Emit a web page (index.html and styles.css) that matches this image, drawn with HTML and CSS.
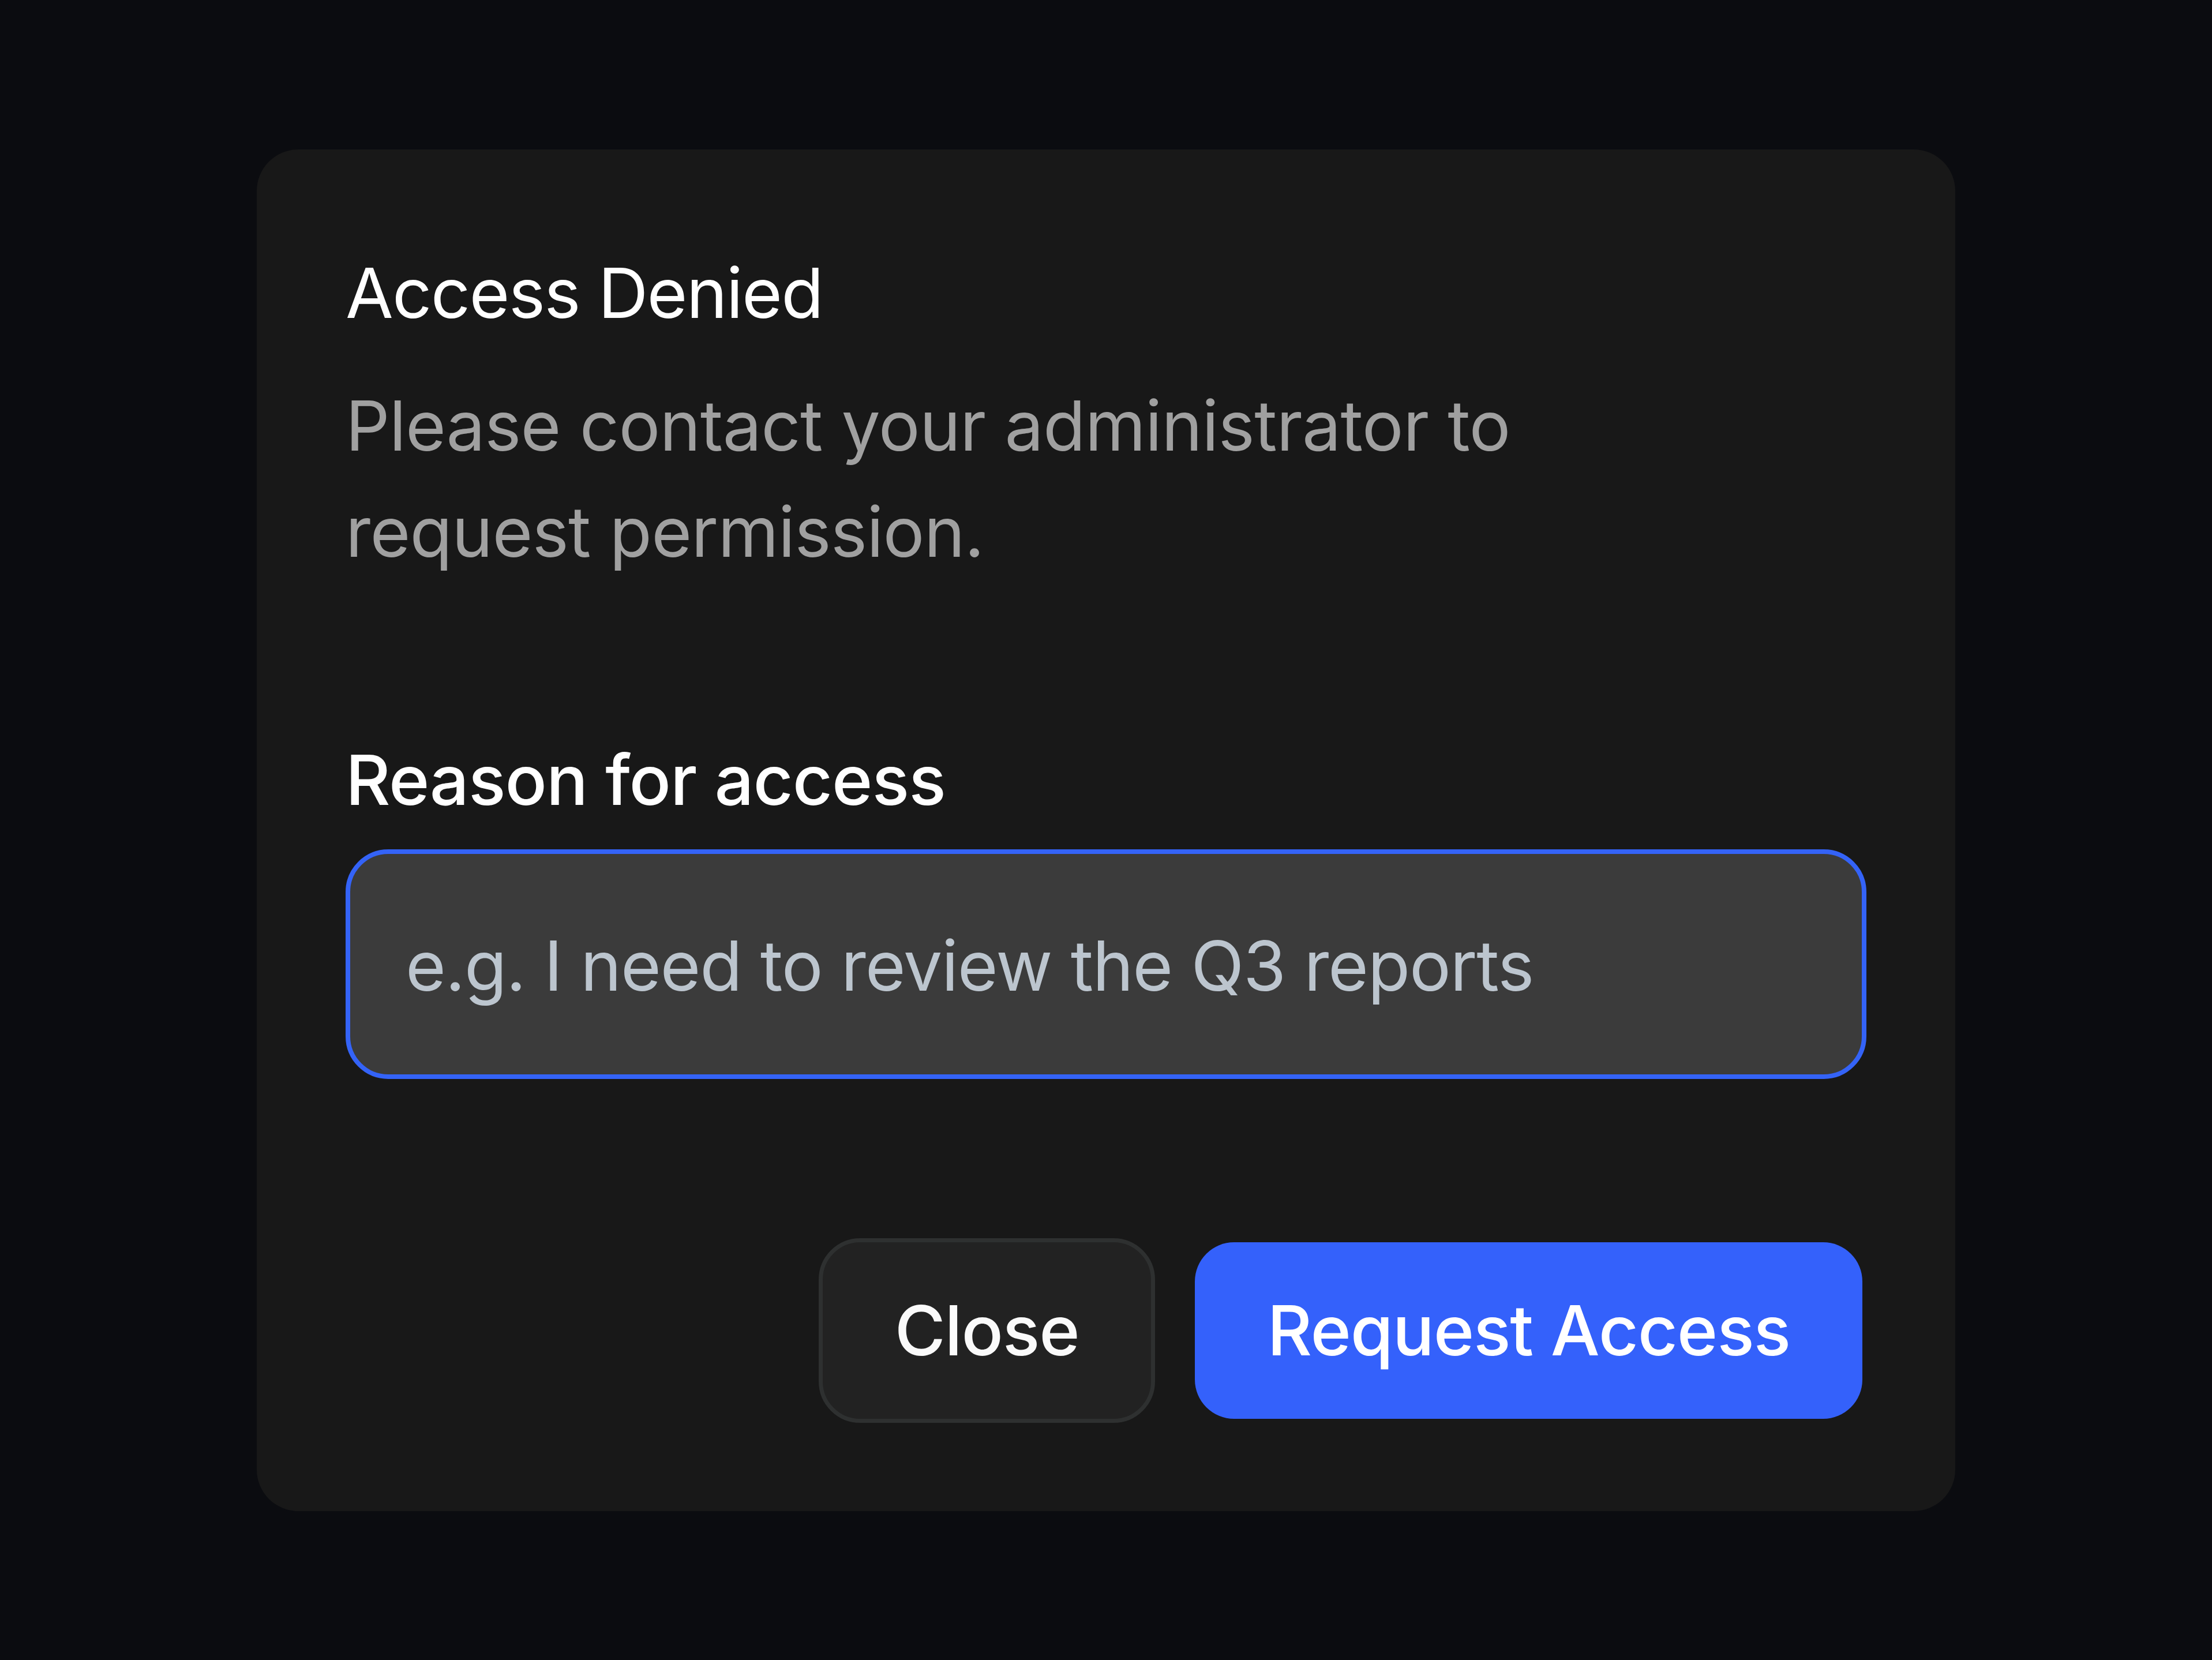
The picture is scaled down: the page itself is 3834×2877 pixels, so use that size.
FILE: index.html
```html
<!DOCTYPE html>
<html lang="en">
<head>
<meta charset="utf-8">
<title>Access Denied</title>
<link rel="stylesheet" href="styles.css">
</head>
<body>
<div class="card">
  <h1 class="title">Access Denied</h1>
  <p class="desc">Please contact your administrator to request permission.</p>
  <div class="field">
    <label class="label" for="reason">Reason for access</label>
    <input class="input" id="reason" type="text" placeholder="e.g. I need to review the Q3 reports">
  </div>
  <div class="actions">
    <button class="btn btn-secondary" type="button">Close</button>
    <button class="btn btn-primary" type="button">Request Access</button>
  </div>
</div>
</body>
</html>
```

FILE: styles.css
```css
html, body {
  margin: 0;
  padding: 0;
}
body {
  background: #0b0c10;
  min-height: 100vh;
  display: flex;
  align-items: center;
  justify-content: center;
  font-family: Inter, "Noto Sans", "Liberation Sans", sans-serif;
}
.card {
  width: 2944px;
  box-sizing: border-box;
  padding: 159px 154px 153px;
  background: #181818;
  border-radius: 72px;
  display: flex;
  flex-direction: column;
}
.title {
  margin: 0;
  font-size: 120px;
  font-weight: 400;
  line-height: 180px;
  letter-spacing: -1.8px;
  color: #ffffff;
}
.desc {
  margin: 48px 0 0;
  max-width: 2150px;
  font-size: 120px;
  font-weight: 400;
  line-height: 184px;
  letter-spacing: -0.8px;
  color: #a0a0a0;
}
.field {
  margin-top: 248px;
  display: flex;
  flex-direction: column;
}
.label {
  font-size: 120px;
  font-weight: 500;
  line-height: 180px;
  letter-spacing: -1px;
  color: #ffffff;
}
.input {
  margin-top: 30px;
  height: 398px;
  box-sizing: border-box;
  border: 8px solid #3463f7;
  border-radius: 74px;
  background: #3b3b3b;
  padding: 5px 96px 0;
  font-family: inherit;
  font-size: 120px;
  letter-spacing: -1.3px;
  color: #ffffff;
  outline: none;
}
.input::placeholder {
  color: #bcc5ce;
  opacity: 1;
}
.actions {
  margin-top: 276px;
  display: flex;
  justify-content: flex-end;
  align-items: center;
  gap: 69px;
  padding-right: 7px;
}
.btn {
  font-family: inherit;
  font-size: 120px;
  font-weight: 500;
  line-height: 180px;
  letter-spacing: -1.2px;
  padding: 63px 125px;
  border-radius: 68px;
  border: none;
  color: #ffffff;
  cursor: pointer;
}
.btn-secondary {
  background: #222222;
  border: 7px solid #2e3030;
  border-radius: 72px;
  color: #fafafa;
}
.btn-primary {
  background: #3461fb;
}
```
